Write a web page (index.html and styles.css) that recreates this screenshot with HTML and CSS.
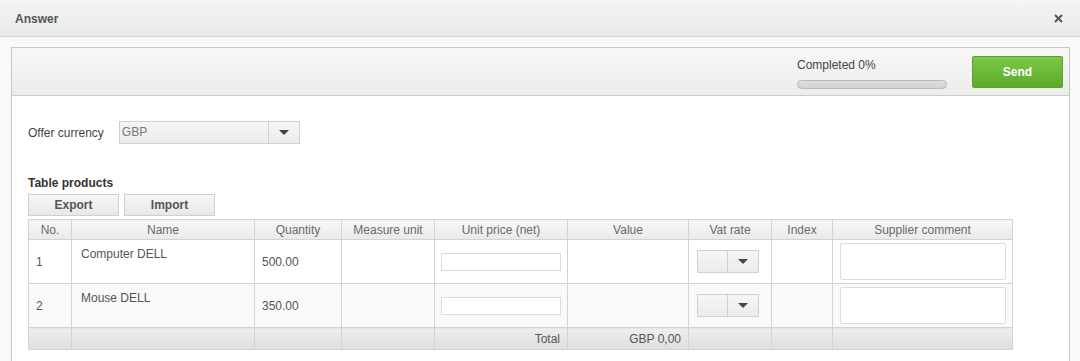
FILE: index.html
```html
<!DOCTYPE html>
<html lang="en">
<head>
  <meta charset="UTF-8" />
  <title>Answer</title>
  <link rel="stylesheet" href="styles.css">
</head>
<body>
  <div class="dialog-header">
    <span class="dialog-title">Answer</span>
    <span class="dialog-close">
      <svg width="9" height="9" viewBox="0 0 9 9"><path d="M1 1L8 8M8 1L1 8" stroke="#555" stroke-width="2" /></svg>
    </span>
  </div>

  <div class="dialog-body">
    <div class="panel">
      <div class="toolbar">
        <div class="progress">
          <div class="progress-label">Completed 0%</div>
          <div class="progress-bar"></div>
        </div>
        <button class="btn-send">Send</button>
      </div>

      <div class="content">
        <div class="field-row">
          <label class="field-label">Offer currency</label>
          <div class="select select-currency">
            <span class="select-value">GBP</span>
            <span class="select-arrow"></span>
          </div>
        </div>

        <div class="section-title">Table products</div>
        <div class="table-buttons">
          <button class="btn-gray">Export</button>
          <button class="btn-gray">Import</button>
        </div>

        <table class="products">
          <colgroup>
            <col style="width:43px"><col style="width:183px"><col style="width:87px">
            <col style="width:93px"><col style="width:133px"><col style="width:121px">
            <col style="width:83px"><col style="width:61px"><col style="width:180px">
          </colgroup>
          <thead>
            <tr>
              <th>No.</th>
              <th>Name</th>
              <th>Quantity</th>
              <th>Measure unit</th>
              <th>Unit price (net)</th>
              <th>Value</th>
              <th>Vat rate</th>
              <th>Index</th>
              <th>Supplier comment</th>
            </tr>
          </thead>
          <tbody>
            <tr>
              <td>1</td>
              <td class="cell-name">Computer DELL</td>
              <td>500.00</td>
              <td></td>
              <td class="cell-input"><input class="text-input" type="text"></td>
              <td></td>
              <td class="cell-input"><div class="select select-vat"><span class="select-value"></span><span class="select-arrow"></span></div></td>
              <td></td>
              <td class="cell-input"><textarea class="comment"></textarea></td>
            </tr>
            <tr class="row-alt">
              <td>2</td>
              <td class="cell-name">Mouse DELL</td>
              <td>350.00</td>
              <td></td>
              <td class="cell-input"><input class="text-input" type="text"></td>
              <td></td>
              <td class="cell-input"><div class="select select-vat"><span class="select-value"></span><span class="select-arrow"></span></div></td>
              <td></td>
              <td class="cell-input"><textarea class="comment"></textarea></td>
            </tr>
          </tbody>
          <tfoot>
            <tr>
              <td></td>
              <td></td>
              <td></td>
              <td></td>
              <td class="num">Total</td>
              <td class="num">GBP 0,00</td>
              <td></td>
              <td></td>
              <td></td>
            </tr>
          </tfoot>
        </table>
      </div>
    </div>
  </div>
</body>
</html>
```

FILE: styles.css
```css
body {
  font-family: "Liberation Sans", Arial, sans-serif;
  font-size: 12px;
  color: #555;
  background: #f9f9f9;
  margin: 0;
  height: 361px;
  overflow: hidden;
}

.dialog-header {
  height: 36px;
  display: flex;
  align-items: center;
  justify-content: space-between;
  padding: 0 17px 0 15px;
  background: linear-gradient(#f4f5f5, #e8e9e9);
  border-bottom: 1px solid #d4d4d4;
}

.dialog-title {
  font-weight: bold;
  color: #555;
  padding-top: 2px;
}

.dialog-close {
  display: flex;
}

.dialog-body {
  padding: 10px 10px 0 11px;
}

.panel {
  background: #fff;
  border: 1px solid #c6c6c6;
  border-bottom: none;
  height: 320px;
}

.toolbar {
  height: 47px;
  display: flex;
  align-items: flex-start;
  justify-content: flex-end;
  background: linear-gradient(#f7f7f7, #ececec);
  border-bottom: 1px solid #cccccc;
}

.progress {
  width: 150px;
  margin-top: 10px;
  margin-right: 25px;
}

.progress-label {
  color: #444;
  line-height: 14px;
}

.progress-bar {
  margin-top: 8px;
  height: 7px;
  width: 148px;
  border: 1px solid #b9b9b9;
  border-radius: 5px;
  background: linear-gradient(#dedede, #d2d2d2);
}

.btn-send {
  margin: 8px 6px 0 0;
  width: 91px;
  height: 32px;
  border: 1px solid #5d9f30;
  border-radius: 2px;
  background: linear-gradient(#7fc747, #5aac29);
  color: #fff;
  font-family: inherit;
  font-size: 12px;
  font-weight: bold;
}

.content {
  padding: 25px 16px 0 16px;
}

.field-row {
  display: flex;
  align-items: center;
  gap: 15px;
}

.field-label {
  color: #444;
}

.select {
  display: flex;
  height: 21px;
  border: 1px solid #d0d0d0;
  background: linear-gradient(#f6f6f6, #ebebeb);
}

.select-value {
  flex: 1;
  padding-left: 2px;
  line-height: 21px;
  color: #777;
  border-right: 1px solid #d0d0d0;
}

.select-arrow {
  width: 30px;
  position: relative;
}

.select-arrow::after {
  content: "";
  position: absolute;
  left: 10px;
  top: 8px;
  border-left: 5px solid transparent;
  border-right: 5px solid transparent;
  border-top: 5px solid #444;
}

.select-currency {
  width: 179px;
}

.section-title {
  margin-top: 32px;
  font-weight: bold;
  color: #333;
  line-height: 14px;
}

.table-buttons {
  display: flex;
  gap: 5px;
  margin-top: 4px;
}

.btn-gray {
  width: 91px;
  height: 22px;
  border: 1px solid #d0d0d0;
  background: linear-gradient(#f6f6f6, #e8e8e8);
  color: #555;
  font-family: inherit;
  font-size: 12px;
  font-weight: bold;
  padding: 0;
}

.products {
  margin-top: 3px;
  width: 985px;
  border-collapse: collapse;
  table-layout: fixed;
}

.products th,
.products td {
  border: 1px solid #d3d3d3;
  padding: 0 7px;
  text-align: left;
}

.products thead tr {
  height: 20px;
}

.products tbody tr {
  height: 44px;
}

.products tfoot tr {
  height: 22px;
}

.products th {
  font-weight: normal;
  text-align: center;
  color: #6a6a6a;
  background: linear-gradient(#f8f8f8, #e9e9e9);
}

.products tbody td {
  background: #fff;
}

.products tbody .row-alt td {
  background: #f9f9f9;
}

.products .cell-name {
  vertical-align: top;
  padding-top: 7px;
  padding-left: 9px;
}

.products .cell-input {
  text-align: center;
  padding: 0;
}

.products tfoot td {
  background: linear-gradient(#eeeeee, #dedede);
}

.products td.num {
  text-align: right;
}

.text-input {
  width: 118px;
  height: 16px;
  padding: 0;
  border: 1px solid #dcdcdc;
  background: #fff;
  display: block;
  margin: 0 auto;
}

.select-vat {
  width: 60px;
  margin-left: 8px;
}

.comment {
  display: block;
  width: 164px;
  height: 35px;
  margin: 0 auto;
  padding: 0;
  border: 1px solid #dcdcdc;
  border-radius: 2px;
  resize: none;
}
```
